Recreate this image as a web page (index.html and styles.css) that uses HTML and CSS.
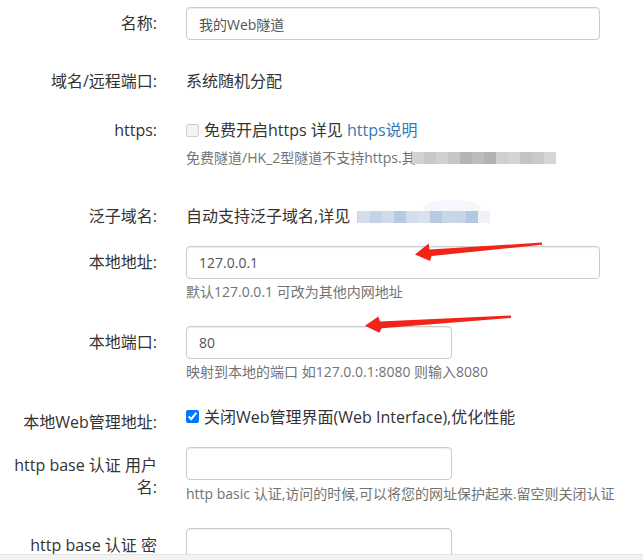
FILE: index.html
```html
<!DOCTYPE html>
<html lang="zh-CN">
<head>
<meta charset="utf-8">
<title>隧道配置</title>
<link rel="stylesheet" href="styles.css">
</head>
<body>
<div class="form">
  <div class="row r1">
    <label class="lbl">名称:</label>
    <div class="ctl"><input class="inp wide" type="text" value="我的Web隧道"></div>
  </div>
  <div class="row r2">
    <label class="lbl">域名/远程端口:</label>
    <div class="ctl"><div class="static">系统随机分配</div></div>
  </div>
  <div class="row r3">
    <label class="lbl">https:</label>
    <div class="ctl">
      <div class="chk"><span class="box-off"></span><span>免费开启https 详见 <a class="link" href="#">https说明</a></span></div>
      <div class="help help-gap">免费隧道/HK_2型隧道不支持https.其<span class="blur gray"><i></i><i></i><i></i><i></i><i></i><i></i><i></i><i></i><i></i><i></i><i></i><i></i></span></div>
    </div>
  </div>
  <div class="row r4">
    <label class="lbl">泛子域名:</label>
    <div class="ctl"><div class="static">自动支持泛子域名,详见<span class="blur blue"><i></i><i></i><i></i><i></i><i></i><i></i><i></i><i></i><i></i><i></i><i></i></span></div></div>
  </div>
  <div class="row r5">
    <label class="lbl">本地地址:</label>
    <div class="ctl">
      <input class="inp wide" type="text" value="127.0.0.1">
      <div class="help help-tight">默认127.0.0.1 可改为其他内网地址</div>
    </div>
  </div>
  <div class="row r6">
    <label class="lbl">本地端口:</label>
    <div class="ctl">
      <input class="inp narrow" type="text" value="80">
      <div class="help help-tight">映射到本地的端口 如127.0.0.1:8080 则输入8080</div>
    </div>
  </div>
  <div class="row r7">
    <label class="lbl lbl-low">本地Web管理地址:</label>
    <div class="ctl">
      <div class="chk"><input class="cb" type="checkbox" checked><span>关闭Web管理界面(Web Interface),优化性能</span></div>
    </div>
  </div>
  <div class="row r8">
    <label class="lbl lbl-two">http base 认证 用户<br>名:</label>
    <div class="ctl">
      <input class="inp narrow" type="text" value="">
      <div class="help help-four">http basic 认证,访问的时候,可以将您的网址保护起来.留空则关闭认证</div>
    </div>
  </div>
  <div class="row r9">
    <label class="lbl lbl-nine">http base 认证 密码:</label>
    <div class="ctl"><input class="inp narrow" type="password" value=""></div>
  </div>
</div>

<svg class="arrows" width="643" height="560" viewBox="0 0 643 560" aria-hidden="true">
  <polygon points="542,242.6 429.6,249.4 428.6,243.6 415,254.4 430,260.9 431.6,256 542,244.8" fill="#f2241a"/>
  <polygon points="511,315.4 380,321.6 378.3,316.4 365,325.7 379.3,332.8 381.7,328.3 511,317.9" fill="#f2241a"/>
</svg>

<div class="statusbar"></div>
</body>
</html>
```

FILE: styles.css
```css
html, body {
  margin: 0;
  height: 560px;
  overflow: hidden;
  background: #fff;
}

body {
  font-family: "Open Sans", "Noto Sans CJK SC", sans-serif;
  color: #333;
}

.form {
  padding-top: 7px;
}

.row {
  display: grid;
  grid-template-columns: 157px 1fr;
  column-gap: 29px;
  align-items: start;
}

.r2 { margin-top: 25px; }
.r3 { margin-top: 23px; }
.r4 { margin-top: 32px; }
.r5 { margin-top: 20px; }
.r6 { margin-top: 24px; }
.r7 { margin-top: 19px; }
.r8 { margin-top: 15px; }
.r9 { margin-top: 24px; }

.lbl {
  display: block;
  text-align: right;
  font-size: 16px;
  line-height: 20px;
  padding-top: 6px;
  white-space: nowrap;
  color: #333;
}

.lbl-low { padding-top: 11px; }

.lbl-two {
  line-height: 22px;
  padding-top: 7px;
}

/* the last label wraps like the others, but its second line falls below the window */
.lbl-nine {
  white-space: normal;
  width: 146px;
  margin-left: auto;
  line-height: 20px;
  padding-top: 7px;
  height: 20px;
  overflow: hidden;
}

.static {
  font-size: 16px;
  line-height: 20px;
  padding-top: 6px;
  white-space: nowrap;
  display: flex;
  align-items: center;
}

.inp {
  display: block;
  box-sizing: border-box;
  height: 33px;
  margin: 0;
  border: 1px solid #ccc;
  border-radius: 4px;
  padding: 0 12px;
  font-family: "Open Sans", "Noto Sans CJK SC", sans-serif;
  font-size: 14px;
  color: #555;
  background: #fff;
  box-shadow: inset 0 1px 1px rgba(0, 0, 0, 0.075);
  outline: none;
}

.wide { width: 414px; }
.narrow { width: 266px; }

.chk {
  display: flex;
  align-items: center;
  gap: 5px;
  padding-top: 6px;
  font-size: 16px;
  line-height: 20px;
  white-space: nowrap;
}

.box-off {
  display: block;
  width: 13px;
  height: 13px;
  box-sizing: border-box;
  border: 1px solid #cfcfcf;
  border-radius: 2px;
  background: #f3f3f3;
  flex: none;
}

.cb {
  width: 13px;
  height: 13px;
  margin: 0 0 1px 0;
  flex: none;
}

.link {
  color: #337ab7;
  text-decoration: none;
}

.help {
  font-size: 14px;
  line-height: 20px;
  color: #737373;
  white-space: nowrap;
  display: flex;
  align-items: center;
}

.help-gap { margin-top: 8px; }
.help-tight { margin-top: 3px; }
.help-four { margin-top: 4px; }

.blur {
  display: inline-flex;
  height: 12px;
  position: relative;
}

.blur i {
  display: block;
  width: 12px;
  height: 12px;
}

.gray { margin-left: -4px; }
.gray i:nth-child(1) { background: #d2d2d2; }
.gray i:nth-child(2) { background: #c8c8c8; }
.gray i:nth-child(3) { background: #d0d0d0; }
.gray i:nth-child(4) { background: #c6c6c6; }
.gray i:nth-child(5) { background: #b4b4b4; }
.gray i:nth-child(6) { background: #bcbcbc; }
.gray i:nth-child(7) { background: #b2b2b2; }
.gray i:nth-child(8) { background: #cfcfcf; }
.gray i:nth-child(9) { background: #d4d4d4; }
.gray i:nth-child(10) { background: #c4c4c4; }
.gray i:nth-child(11) { background: #c9c9c9; }
.gray i:nth-child(12) { background: #d6d6d6; }

.blue {
  margin-left: 7px;
  border-left: 1px solid #e6c8d4;
  margin-top: 1px;
}
.blue::before {
  content: "";
  position: absolute;
  left: 66px;
  top: -11px;
  width: 56px;
  height: 13px;
  border-radius: 50% 50% 0 0;
  background: #f4f7fb;
}
.blue i { position: relative; }
.blue i:nth-child(1) { background: #d6dce8; }
.blue i:nth-child(2) { background: #c3d3e6; }
.blue i:nth-child(3) { background: #d0dae8; }
.blue i:nth-child(4) { background: #b4cbe1; }
.blue i:nth-child(5) { background: #d3deea; }
.blue i:nth-child(6) { background: #d8e2ee; }
.blue i:nth-child(7) { background: #b8cae0; }
.blue i:nth-child(8) { background: #c8d6e6; }
.blue i:nth-child(9) { background: #c6d6e8; }
.blue i:nth-child(10) { background: #b2c8e0; }
.blue i:nth-child(11) { background: #eff3f8; }

.arrows {
  position: absolute;
  left: 0;
  top: 0;
  pointer-events: none;
}

.statusbar {
  position: fixed;
  left: 0;
  right: 0;
  bottom: 0;
  height: 5px;
  background: #f2f2f2;
  border-top: 1px solid #e4e4e4;
}
```
